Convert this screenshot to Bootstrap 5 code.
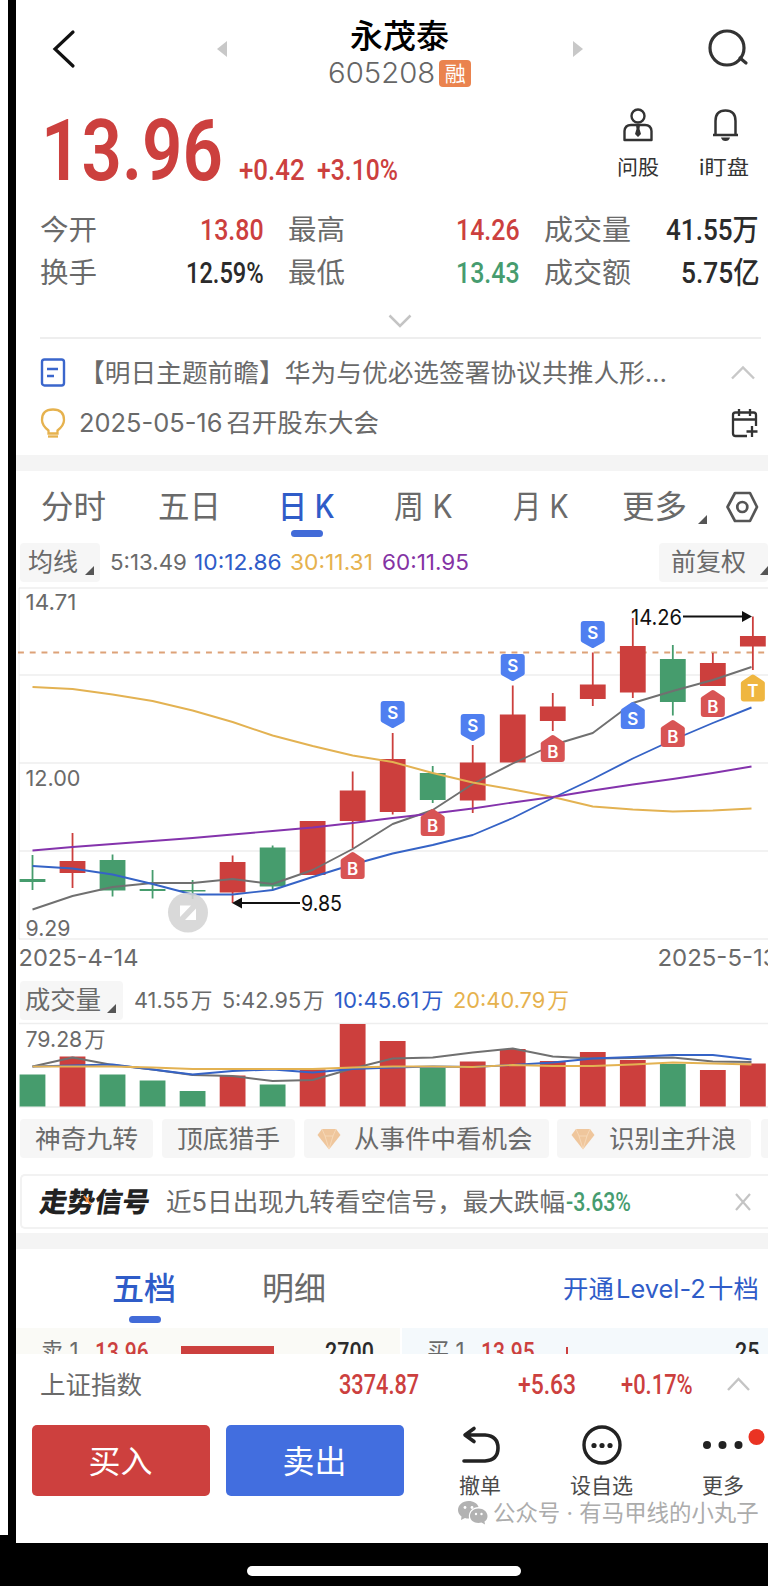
<!DOCTYPE html>
<html lang="zh-CN">
<head>
<meta charset="utf-8">
<meta name="viewport" content="width=device-width, initial-scale=1">
<title>永茂泰 605208</title>
<link href="https://cdn.jsdelivr.net/npm/bootstrap@5.3.0/dist/css/bootstrap.min.css" rel="stylesheet">
<style>
:root{--up:#cc403e;--down:#469c6f;--blue:#2f5cc8;--ink:#2b2b2b;--mut:#6a6a6a;--gold:#e6b24e;--purple:#8433a4}
html,body{margin:0;background:#000;overflow:hidden}
body{font-family:Inter,"Noto Sans CJK SC",sans-serif;color:var(--mut);width:768px;height:1586px;line-height:1.2}
.side{width:8px;height:1535px;background:#fff}
.app{width:752px;height:1543px;margin-left:8px;background:#fff;overflow:hidden}
.fit{display:inline-block;white-space:nowrap;justify-self:start;transform-origin:0 50%}
.din{font-family:Roboto,"Noto Sans CJK SC",sans-serif;font-weight:550}
.up{color:var(--up)}.down{color:var(--down)}.blue{color:var(--blue)}.ink{color:var(--ink)}.gold{color:var(--gold)}.purple{color:var(--purple)}
.line-row{display:grid;align-items:center}
svg{display:block;overflow:visible}
.band{height:16px;background:#f4f4f4}

.hd{height:95px;grid-template-columns:200px 112px 246px 122px 72px}
.hd>div{margin-top:12px}
.stock-name{font-size:33px;font-weight:500;color:#000;line-height:34px}
.stock-name .fit{margin-left:22px}
.code{font-size:28.5px;font-weight:300;color:#666;line-height:30px;margin-top:5px}
.rz{width:32px;height:27px;border-radius:4px;background:#ea834e;color:#fff;font-size:21px;line-height:27px;margin-left:4px;font-weight:400}

.quote{height:110px;grid-template-columns:25px 198px 78px 300px 82px 69px}
.price{font-size:86px;line-height:86px;font-weight:600;margin-top:2px}
.chg{font-size:29px;padding-top:40px;font-weight:500}
.mini{font-size:20.5px;color:#333;line-height:22px}
.quote .mini{margin-top:-12px}
.quote>div{margin-top:-15px}

.stat{height:43px;grid-template-columns:24px 248px 256px 1fr;font-size:28px}
.pair{display:flex;justify-content:flex-start;align-items:center}
.pair .val{margin-left:auto}
.val{font-size:30px;line-height:34px;margin-top:-2px}

.newsbox{padding:11px 0 7px}
.news{height:50px;grid-template-columns:24px 39px 652px 1fr;font-size:25.5px}

.tabs{position:relative;height:71px;padding-top:2px;grid-template-columns:25px 117px 120px 116px 119px 109px 76px 27px 1fr;font-size:32px}
.tabs .act,.t2 .act{font-weight:500;color:var(--blue)}
.pill{height:7px;width:32px;border-radius:4px;background:#426bd8}
#pill1{position:absolute;left:275px;top:59px}
#pill2{position:absolute;left:113px;top:67px}
.gbtn{height:39px;background:#f6f6f6;border-radius:4px;display:flex;align-items:center;font-size:25px}
.gbtn .tri{margin-top:17px}
.tri{width:9px;height:9px;background:#555;clip-path:polygon(100% 0,100% 100%,0 100%)}
.ma{height:45px;padding-bottom:5px;grid-template-columns:4px 90px 84px 96px 92px 277px 109px;font-size:22px}
.vol{height:45px;padding-bottom:1px;grid-template-columns:4px 114px 88px 112px 119px 1fr;font-size:22px}
#g1{width:80px;gap:7px}
#g2{width:109px;padding-left:12px;gap:14px}
#g3{width:103px;padding-left:5px;gap:6px}

.chips{padding-left:4px;height:55px}
.chip{height:39px;background:#f6f6f6;border-radius:4px;font-size:25.5px;display:flex;align-items:center;padding-left:15px;padding-top:2px;flex:none}
.chips .chip:nth-child(1),.chips .chip:nth-child(2){width:133px;margin-right:9px}
.chips .chip:nth-child(3){width:245px;margin-right:8px;padding-left:13px;gap:13px}
.chips .chip:nth-child(4){width:194px;margin-right:10px;padding-left:14px;gap:14px}
.chips .chip:nth-child(5){width:10px;padding:0}

.signal{height:55px;border:2px solid #f2f2f2;border-right:0;border-radius:5px 0 0 5px;margin-left:4px;grid-template-columns:18px 126px 400px 167px 1fr;font-size:25.5px;padding-top:1px}
.logo-t{font-weight:900;color:#222;font-size:27.5px;position:relative}
.logo-t i{font-style:normal;display:inline-block;transform:skewX(-9deg)}
.logo-t svg{position:absolute;left:43px;top:9px}
#band2{margin-top:4px}

.t2{position:relative;height:79px;padding-top:2px;grid-template-columns:96px 150px 301px 1fr;font-size:32px}
.l2{font-size:25px;margin-top:-2px}
.lv{height:26px;overflow:hidden}
.lv>div{height:50px;grid-template-rows:48px;font-size:24px}
.lv .din{font-size:25px;padding-top:2px}
.sell{background:#fafaf6;width:384px;grid-template-columns:25px 54px 86px 144px 1fr}
.buy{background:#f4f9fc;width:366px;grid-template-columns:25px 54px 85px 169px 1fr}
.sell b{height:13px;width:93px;background:var(--up);align-self:start;margin-top:18px}
.buy b{height:13px;width:2px;background:var(--up);align-self:start;margin-top:19px}
.idx{height:62px;grid-template-columns:24px 299px 179px 103px 106px 1fr;font-size:25.5px}
.idx .din{font-size:28px}

.trade{height:71px;width:178px;border-radius:5px;color:#fff;font-size:31.5px;border:0;padding:3px 0 0}
#buy{background:#cd403e}
#sell{background:#426edf}
.foot{height:73px;margin-top:9px;padding-left:16px;display:grid;grid-template-columns:194px 232px 111px 132px 60px}
.foot .mini{font-size:21px;margin-top:10px;color:#4a4a4a;position:relative;left:1px}
.wm{height:32px;margin-top:-2px;grid-template-columns:442px 35px 1fr;font-size:22.5px;color:#acacac}
.home{width:274px;height:10px;border-radius:5px;background:#fff;margin:23px 0 0 247px}
.chart text{font-family:Inter,"Noto Sans CJK SC",sans-serif;font-size:22px}
</style>
</head>
<body>
<div class="d-flex">
<div class="side"></div>
<main class="app">
  <header class="line-row hd">
    <svg width="200" height="95"><path d="M57 32L39 49L57 66" fill="none" stroke="#111" stroke-width="3.2" stroke-linecap="round"/></svg>
    <svg width="12" height="95"><path d="M11 41V57L1 49Z" fill="#c8c8c8"/></svg>
    <div class="d-flex flex-column">
      <div class="stock-name"><span class="fit" data-w="99">永茂泰</span></div>
      <div class="d-flex align-items-center code"><span class="fit" data-w="107">605208</span><span class="rz text-center">融</span></div>
    </div>
    <svg width="12" height="95"><path d="M-1 41V57L9 49Z" fill="#c8c8c8"/></svg>
    <svg width="72" height="95"><g fill="none" stroke="#333" stroke-width="3.2" stroke-linecap="round"><circle cx="31" cy="48" r="17"/><path d="M44 58L50 63"/></g></svg>
  </header>

  <section class="line-row quote">
    <span></span>
    <span class="fit din price up" data-w="182">13.96</span>
    <span class="fit din chg up" data-w="66">+0.42</span>
    <span class="fit din chg up" data-w="81">+3.10%</span>
    <div>
      <svg width="44" height="54" viewBox="617 107 44 54"><g fill="none" stroke="#333" stroke-width="2.4"><circle cx="638" cy="117" r="6.5"/><path d="M624.500 141V132Q625 126 631 126H645Q651 126 651.500 132V141Z" stroke-linejoin="round"/></g><path d="M636 126H640L639.500 130L641 135L638 138L635 135L636.500 130Z" fill="#333"/></svg>
      <span class="fit mini" data-w="42">问股</span>
    </div>
    <div>
      <svg width="44" height="54" viewBox="699 107 44 54"><path d="M715.500 136V122Q715.500 111.500 725.500 111.500T735.500 122V136M713 136H738" fill="none" stroke="#333" stroke-width="2.500"/><path d="M721 138.500H730Q729 142 725.500 142T721 138.500Z" fill="#333"/></svg>
      <span class="fit mini" data-w="50">i盯盘</span>
    </div>
  </section>

  <section class="pt-1">
    <div class="line-row stat"><span></span>
      <div class="pair"><span class="fit" data-w="57">今开</span></div>
      <div class="pair"><span class="fit" data-w="57">最高</span></div>
      <div class="pair"><span class="fit" data-w="87">成交量</span></div>
    </div>
    <div class="line-row stat"><span></span>
      <div class="pair"><span class="fit" data-w="57">换手</span></div>
      <div class="pair"><span class="fit" data-w="57">最低</span></div>
      <div class="pair"><span class="fit" data-w="87">成交额</span></div>
    </div>
    <svg width="752" height="42"><path d="M373.500 20.500L384 31L394.500 20.500" fill="none" stroke="#c4c4c4" stroke-width="2.500"/><path d="M24 43H745" stroke="#eee" stroke-width="2"/></svg>
  </section>

  <section class="newsbox">
    <div class="line-row news"><span></span>
      <svg width="28" height="30"><g fill="none" stroke="#3a66cc" stroke-width="2.400"><rect x="2" y="1.500" width="22" height="26" rx="2.500"/><path d="M7 11H18M7 18H14"/></g></svg>
      <span class="fit" data-w="588">【明日主题前瞻】华为与优必选签署协议共推人形…</span>
      <svg width="30" height="30"><path d="M1 20.500L12 9.500L23 20.500" fill="none" stroke="#c8c8c8" stroke-width="2.400"/></svg>
    </div>
    <div class="line-row news"><span></span>
      <svg width="28" height="30"><path d="M8.500 25.500V22.500Q2 17.500 2 12Q2 1.500 13 1.500T24 12Q24 17.500 17.500 22.500V25.500Z" fill="none" stroke="#e6b24e" stroke-width="2.300"/><path d="M8 28.500H18" stroke="#e6b24e" stroke-width="2.300"/></svg>
      <span class="fit" data-w="300">2025-05-16<span class="ms-1">召开股东大会</span></span>
      <svg width="30" height="30"><path d="M16 28H4.500Q2 28 2 25.500V7Q2 4.500 4.500 4.500H22.500Q25 4.500 25 7V18M2 11.500H25M8 1V8M19 1V8M21 18V29M15.500 23.500H26.500" fill="none" stroke="#333" stroke-width="2.300"/></svg>
    </div>
  </section>
  <div class="band"></div>

  <nav class="line-row tabs"><span></span>
    <span class="fit" data-w="65">分时</span><span class="fit" data-w="63">五日</span>
    <span class="fit act" data-w="57">日 K</span><span class="fit" data-w="59">周 K</span><span class="fit" data-w="56">月 K</span>
    <span class="fit" data-w="65">更多</span><span class="tri mt-4"></span>
    <svg width="36" height="32"><g fill="none" stroke="#555" stroke-width="2.700"><path d="M10 1H25L32 15L25 29H10L2.500 15Z" stroke-linejoin="round"/><circle cx="17.300" cy="15" r="5"/></g></svg>
    <span class="pill" id="pill1"></span>
  </nav>
  <div class="line-row ma"><span></span>
    <div class="gbtn" id="g1"><span class="fit ms-2" data-w="50">均线</span></div>
    <span class="fit" data-w="77">5:13.49</span><span class="fit blue" data-w="88">10:12.86</span><span class="fit gold" data-w="83">30:11.31</span><span class="fit purple" data-w="87">60:11.95</span>
    <div class="gbtn" id="g2"><span class="fit" data-w="75">前复权</span></div>
  </div>

  <svg id="kline" class="chart" width="752" height="391" viewBox="16 587 752 391"></svg>

  <div class="line-row vol"><span></span>
    <div class="gbtn" id="g3"><span class="fit" data-w="76">成交量</span></div>
    <span class="fit" data-w="79">41.55&#8202;万</span><span class="fit" data-w="103">5:42.95&#8202;万</span><span class="fit blue" data-w="110">10:45.61&#8202;万</span><span class="fit gold" data-w="116">20:40.79&#8202;万</span>
  </div>
  <svg id="volume" class="chart" width="752" height="96" viewBox="16 1023 752 96"></svg>

  <div class="d-flex chips">
    <span class="chip"><span class="fit" data-w="103">神奇九转</span></span>
    <span class="chip"><span class="fit" data-w="103">顶底猎手</span></span>
    <span class="chip"><svg width="24" height="22"><path d="M5 0H19L23.500 6L12 20.500L.5 6Z" fill="#efc69c"/><path d="M5 0L8 7H16L19 0M8 7L12 20L16 7" fill="none" stroke="#f8dcbc" stroke-width=".8"/></svg><span class="fit" data-w="179">从事件中看机会</span></span>
    <span class="chip"><svg width="24" height="22"><path d="M5 0H19L23.500 6L12 20.500L.5 6Z" fill="#efc69c"/><path d="M5 0L8 7H16L19 0M8 7L12 20L16 7" fill="none" stroke="#f8dcbc" stroke-width=".8"/></svg><span class="fit" data-w="128">识别主升浪</span></span>
    <span class="chip"></span>
  </div>

  <div class="line-row signal"><span></span>
    <span class="fit logo-t" data-w="110"><i>走势信号</i><svg width="10" height="12"><path d="M1 1L8 10M6 2L3 7" stroke="#f08a3c" stroke-width="2"/></svg></span>
    <span class="fit" data-w="399">近5日出现九转看空信号，最大跌幅</span>
    <span class="fit din down" data-w="65">-3.63%</span>
    <svg width="20" height="20"><path d="M3 2L17 18M17 2L3 18" stroke="#c4c4c4" stroke-width="2.200"/></svg>
  </div>
  <div class="band" id="band2"></div>

  <nav class="line-row t2"><span></span>
    <span class="fit act" data-w="64">五档</span><span class="fit" data-w="64">明细</span>
    <span class="fit blue l2" data-w="196">开通&#8202;Level-2&#8202;十档</span>
    <span class="pill" id="pill2"></span>
  </nav>
  <div class="d-flex justify-content-between lv">
    <div class="line-row sell"><span></span><span class="fit" data-w="38">卖 1</span><span class="fit din up" data-w="54">13.96</span><b></b><span class="fit din ink" data-w="49">2700</span></div>
    <div class="line-row buy"><span></span><span class="fit" data-w="38">买 1</span><span class="fit din up" data-w="54">13.95</span><b></b><span class="fit din ink" data-w="24">25</span></div>
  </div>
  <div class="line-row idx"><span></span>
    <span class="fit" data-w="102">上证指数</span><span class="fit din up" data-w="80">3374.87</span><span class="fit din up" data-w="58">+5.63</span><span class="fit din up" data-w="72">+0.17%</span>
    <svg width="28" height="30"><path d="M1 20L11.500 9L22 20" fill="none" stroke="#c4c4c4" stroke-width="2.400"/></svg>
  </div>
  <div class="foot">
    <button class="trade" id="buy"><span class="fit" data-w="64" data-o="c">买入</span></button>
    <button class="trade" id="sell"><span class="fit" data-w="64" data-o="c">卖出</span></button>
    <div><svg width="44" height="40" viewBox="458 1425 44 40"><path d="M468 1435H485Q498 1436 498 1448T485 1461H464M474 1428.500L465 1435L474 1441.500" fill="none" stroke="#222" stroke-width="3.600" stroke-linecap="round" stroke-linejoin="round"/></svg><span class="fit mini" data-w="42">撤单</span></div>
    <div><svg width="66" height="40" viewBox="569 1425 66 40"><circle cx="602" cy="1445" r="18" fill="none" stroke="#222" stroke-width="3.400"/><g fill="#222"><circle cx="594" cy="1445.500" r="2.600"/><circle cx="602" cy="1445.500" r="2.600"/><circle cx="610" cy="1445.500" r="2.600"/></g></svg><span class="fit mini" data-w="63">设自选</span></div>
    <div><svg width="44" height="40" viewBox="701 1425 44 40"><g fill="#222"><circle cx="707" cy="1445" r="4"/><circle cx="722.500" cy="1445" r="4"/><circle cx="738.500" cy="1445" r="4"/></g><circle cx="756.500" cy="1437" r="8" fill="#ea3323"/></svg><span class="fit mini" data-w="42">更多</span></div>
  </div>
  <div class="line-row wm"><span></span>
    <svg width="30" height="25" viewBox="0 0 30 25"><path d="M10.500 1C4.500 1 0 5 0 10C0 13 1.500 15 3.500 16.500L3 20L7 18Q9 18.700 11 18.500C10 11 15 7 20.500 7C19.500 3.500 15.500 1 10.500 1Z" fill="#b2b2b2"/><path d="M20.500 8.500C15.500 8.500 12 12 12 16S15.500 23 20.500 23L23.500 22.500L27 24.500L26.500 21.500Q29.500 19.500 29.500 16C29.500 12 25.500 8.500 20.500 8.500Z" fill="#b2b2b2"/><g fill="#fff"><circle cx="7" cy="7.500" r="1.400"/><circle cx="14" cy="7.500" r="1.400"/><circle cx="18" cy="14" r="1.200"/><circle cx="23.500" cy="14" r="1.200"/></g></svg>
    <span class="fit" data-w="266">公众号 · 有马甲线的小丸子</span>
  </div>
</main>
</div>
<div class="home"></div>
<script src="https://cdn.jsdelivr.net/npm/bootstrap@5.3.0/dist/js/bootstrap.bundle.min.js"></script>
<script>
// stat values: right aligned inside their cells
const vals=[['13.80','up',64],['14.26','up',64],['41.55万','ink',93],['12.59%','ink',78],['13.43','down',64],['5.75亿','ink',79]];
const ends=[24,24,9];
document.querySelectorAll('.pair').forEach((p,i)=>{
  const s=document.createElement('span');s.className='fit din val '+vals[i][1];s.dataset.w=vals[i][2];s.textContent=vals[i][0];
  p.appendChild(s);p.style.paddingRight=ends[i%3]+'px';
});
document.querySelectorAll('.gbtn').forEach(g=>{const t=document.createElement('span');t.className='tri';g.appendChild(t)});

const X=i=>32.5+i*40.02, RED='#cc3f3d', GREEN='#469c6d';
const poly=(pts,c)=>`<polyline points="${pts.map(p=>p.join()).join(' ')}" fill="none" stroke="${c}" stroke-width="1.9" stroke-linejoin="round"/>`;
const series=(ys,c)=>poly(ys.map((y,i)=>[Math.min(X(i),751.5),y]),c);
const hline=y=>`<path d="M19 ${y}H768" stroke="#eee" stroke-width="1.5"/>`;
// candles: colour, high, low, body top, body bottom
const C=[['g',855,890,879,882],['r',833,888,861,873],['g',854.5,896.5,860,890.5],['g',870,898.5,889,891],['g',880,899,890,891.5],['r',855.5,903,862,892.5],['g',845.5,890,847.5,886.5],['r',821,875,821,875],['r',771.5,848,790.5,821],['r',733,814.5,759,812],['g',766,803,773,800],['r',745,813,762.5,800.5],['r',685.5,762.5,714.5,762.5],['r',693,731,706.5,721],['r',652.5,706,684.5,699],['r',618,698,646,692.5],['g',645,715.5,659,702],['r',653,686,663,686],['r',616.5,670,636,646.5]];
let k='<path d="M19 588V939" stroke="#f0f0f0"/>'+[588,675,763,851,939].map(hline).join('');
k+='<path d="M18 652.500H768" stroke="#dda278" stroke-width="2" stroke-dasharray="5.900 5.850"/>';
C.forEach((c,i)=>{const f=c[0]=='r'?RED:GREEN,x=X(i);k+=`<path d="M${x} ${c[1]}V${c[2]}" stroke="${f}" stroke-width="1.800"/><rect x="${x-12.9}" y="${c[3]}" width="25.800" height="${c[4]-c[3]}" fill="${f}"/>`});
k+=series([909.5,896,887,883,883,879,884,870,849,824,810,784,763.5,745,733,703,691,680,667],'#707070');
k+=series([866,868.5,874.5,884,894.5,894.5,890,877,864.5,853.5,845,835,818,798,779,758.5,740,723,707.5],'#3563c6');
k+=series([687,689,694.5,701,710.5,722,735.5,746,755.5,762,773,782.5,789.5,797,806.5,809.5,811.5,810.5,808.5],'#e3b252');
k+=series([850.5,847,844,841,838,834.5,831,827.5,823,818,813.5,808.5,802.5,797,790.5,784.5,779,773,766.5],'#8433ac');
const mark=(i,y,l,dir)=>{const x=X(i),f={S:'#4f7ff0',B:'#d85454',T:'#efb640'}[l];
  const d=dir?`M${x-12} ${y+3}q0-3 3-3h18q3 0 3 3v16.500q0 1-1.500 2L${x+1.5} ${y+26.500}q-1.500 1-3 0L${x-10.5} ${y+21.500}q-1.500-1-1.500-2z`
             :`M${x-12} ${y+24}q0 3 3 3h18q3 0 3-3v-15.500q0-1-1.500-2L${x+1.500} ${y+.5}q-1.500-1-3 0L${x-10.5} ${y+6.5}q-1.500 1-1.500 2z`;
  k+=`<path d="${d}" fill="${f}"/><text x="${x}" y="${y+(dir?18:22.5)}" text-anchor="middle" fill="#fff" style="font-size:17px;font-weight:600">${l}</text>`};
[[9,701],[11,714],[12,654],[14,621]].forEach(m=>mark(m[0],m[1],'S',1));
[[8,852,'B'],[10,809,'B'],[13,735,'B'],[15,702,'S'],[16,720,'B'],[17,690,'B'],[18,674.5,'T']].forEach(m=>mark(...m,0));
k+='<circle cx="188" cy="912.500" r="20" fill="#d4d4d4" opacity=".88"/><path d="M180 905.500H191L180 917ZM196 920H185L196 908.500Z" fill="#fff"/>';
k+='<path d="M240 903H300M683 616.500H744" stroke="#111" stroke-width="2"/><path d="M232 903L242 897.500V908.500ZM752 616.500L742 611V622Z" fill="#111"/>';
const T=(x,y,t,w,c,fs)=>`<text x="${x}" y="${y}" textLength="${w}" lengthAdjust="spacingAndGlyphs" fill="${c||'#6a6a6a'}" style="font-size:${fs||22}px">${t}</text>`;
k+=T(301,910.5,'9.85',41,'#111')+T(631,624.5,'14.26',51,'#111');
k+=T(25.5,610,'14.71',51)+T(25.5,785.5,'12.00',55)+T(25.5,935.5,'9.29',45);
k+=T(18.5,965.5,'2025-4-14',120,'',23.5)+T(657.5,965.5,'2025-5-13',120,'',23.5);
document.getElementById('kline').innerHTML=k;

const V=[1074.5,1056.5,1074.5,1080.5,1091,1075.5,1084.5,1069.5,1024,1041,1067.5,1061.5,1049,1061,1052,1060,1064,1070,1063.5];
let v=hline(1023.5)+hline(1107);
V.forEach((y,i)=>v+=`<rect x="${X(i)-12.9}" y="${y}" width="25.800" height="${1106.5-y}" fill="${C[i][0]=='r'?RED:GREEN}"/>`);
v+=series([1066.5,1057.5,1065,1069.5,1075,1076,1081,1080,1068.5,1058.5,1057.5,1052.5,1048.5,1056.5,1058.5,1058,1057.5,1061.5,1062],'#707070');
v+=series([1066.5,1065.5,1064.5,1069.5,1074.5,1071,1069.5,1072.5,1069,1067.5,1066.5,1067,1065,1062.5,1058.5,1057,1055,1055,1059.5],'#3563c6');
v+=series([1066.5,1066.5,1066.5,1067.5,1069,1069,1069,1069,1067.5,1066.5,1066.5,1067,1065,1066,1066,1064.5,1062.5,1063.5,1064.5],'#e3b252');
v+=T(25.5,1046.5,'79.28&#8202;万',80);
document.getElementById('volume').innerHTML=v;

// squeeze or stretch each label to its set width
document.querySelectorAll('.fit').forEach(e=>{
  const n=e.offsetWidth,w=+e.dataset.w;
  e.style.transform=`scaleX(${w/n})`;
  if(e.dataset.o){e.style.transformOrigin='50% 50%'}else{e.style.marginRight=(w-n)+'px'}
});
</script>
</body>
</html>
